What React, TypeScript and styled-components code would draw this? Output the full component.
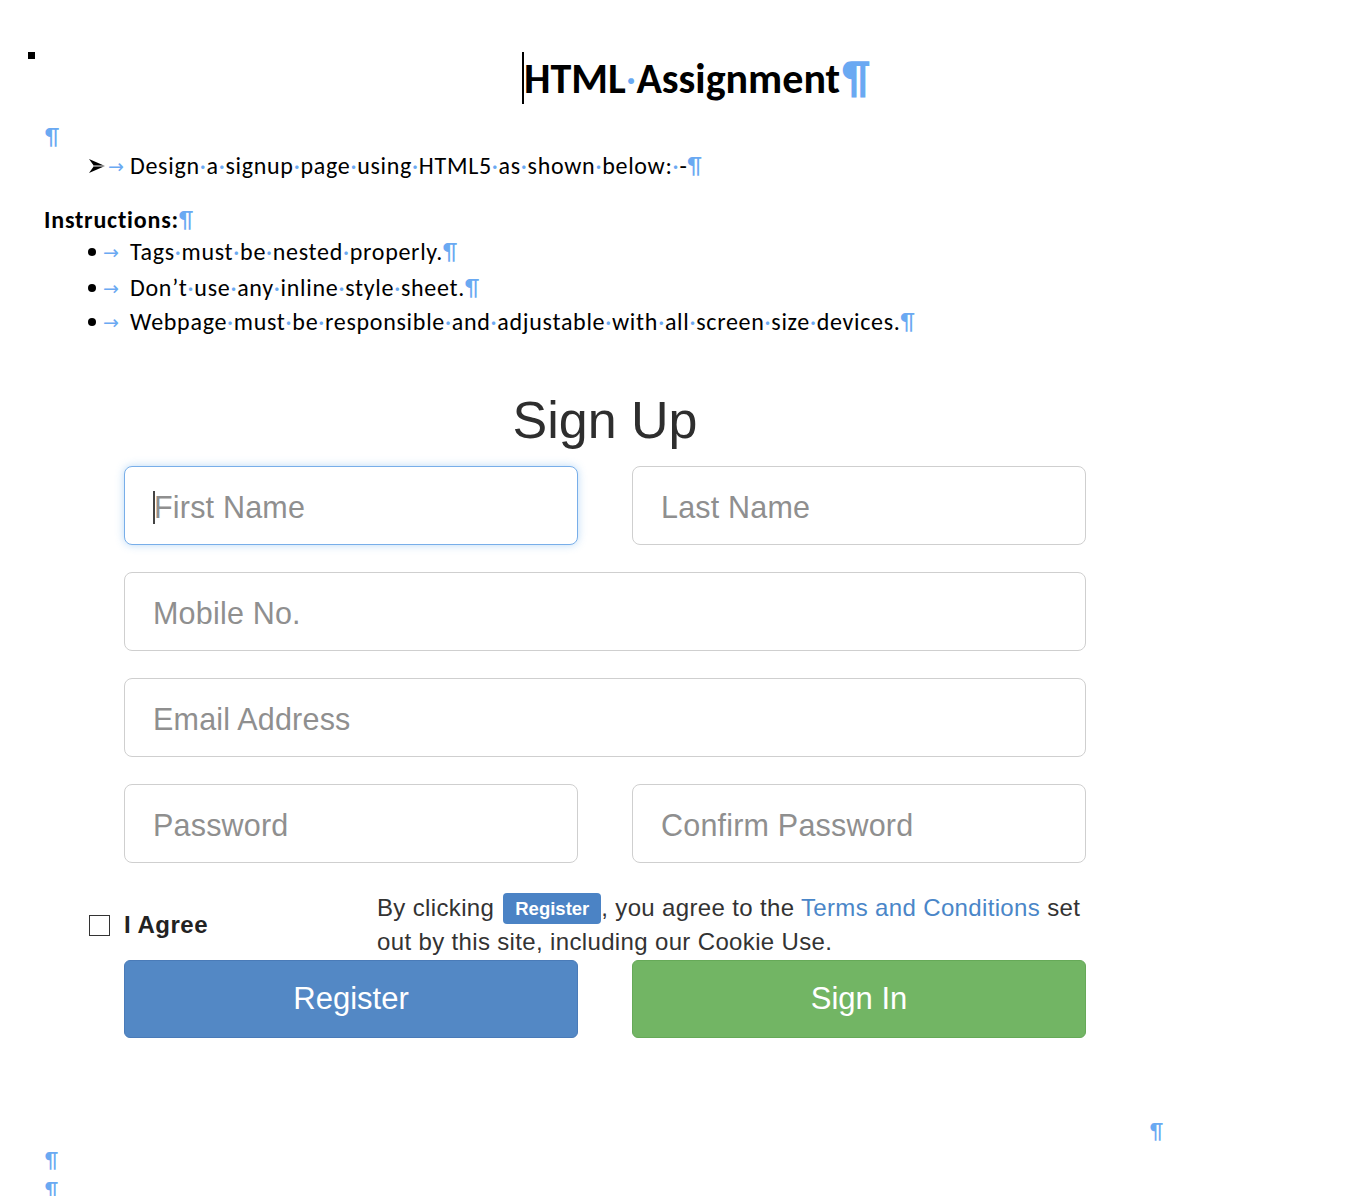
import React from "react";
import styled, { createGlobalStyle } from "styled-components";

const GlobalStyle = createGlobalStyle`
  html, body { margin: 0; padding: 0; background: #ffffff; }
  body { font-family: Carlito, Lato, "Liberation Sans", sans-serif; color: #000; }
  * { box-sizing: border-box; }
`;

const Page = styled.div`
  width: 1348px;
  height: 1196px;
  overflow: hidden;
  display: flex;
  flex-direction: column;
`;

const TitleRow = styled.div`
  display: flex;
  align-items: center;
  height: 52px;
  margin-top: 52px;
  padding-left: 28px;
`;

const Anchor = styled.div`
  width: 7px;
  height: 7px;
  background: #000;
  align-self: flex-start;
`;

const Caret = styled.div`
  width: 2px;
  height: 52px;
  background: #000;
  margin-left: 487px;
`;

const Title = styled.h1`
  margin: 0;
  font-family: Carlito, Lato, sans-serif;
  font-weight: 700;
  font-size: 42px;
  line-height: 52px;
  color: #000;
  white-space: nowrap;
`;

const BigMark = styled.span`
  color: #6aa9f2;
  font-weight: 700;
  font-size: 46px;
  margin-left: 2px;
`;

const Mark = styled.span`
  color: #6aa9f2;
  font-weight: 400;
`;

const Dot = styled.span`
  color: #6aa9f2;
  font-weight: 400;
`;

const DocLine = styled.div<{ $top: number; $indent: number }>`
  display: flex;
  align-items: center;
  height: 24px;
  line-height: 24px;
  margin-top: ${(p) => p.$top}px;
  padding-left: ${(p) => p.$indent}px;
  font-size: 24px;
  letter-spacing: 0.7px;
  white-space: nowrap;
`;

const Strong = styled.span`
  font-weight: 700;
  letter-spacing: 0.8px;
`;

const Marker = styled.span<{ $w: number }>`
  display: inline-flex;
  align-items: center;
  width: ${(p) => p.$w}px;
  letter-spacing: 0;
`;

const ArrowHead = styled.svg`
  width: 18px;
  height: 16px;
  display: block;
`;

const BulletDot = styled.span`
  display: inline-block;
  width: 8px;
  height: 8px;
  border-radius: 50%;
  background: #000;
`;

const Tab = styled.span<{ $w: number }>`
  display: inline-block;
  width: ${(p) => p.$w}px;
  color: #6aa9f2;
  font-family: "DejaVu Sans", sans-serif;
  font-size: 19px;
  letter-spacing: 0;
`;

const FormArea = styled.div`
  width: 962px;
  margin-left: 124px;
  display: flex;
  flex-direction: column;
`;

const FormTitle = styled.h2`
  margin: 56px 0 0;
  height: 60px;
  line-height: 60px;
  text-align: center;
  font-family: "Liberation Sans", Arial, sans-serif;
  font-weight: 400;
  font-size: 52px;
  color: #2e2e2e;
`;

const FieldGrid = styled.div`
  margin-top: 16px;
  display: grid;
  grid-template-columns: 1fr 1fr;
  column-gap: 54px;
  row-gap: 27px;
`;

const Field = styled.div<{ $wide?: boolean; $focused?: boolean }>`
  grid-column: ${(p) => (p.$wide ? "1 / span 2" : "auto")};
  height: 79px;
  border: 1.5px solid ${(p) => (p.$focused ? "#78aee9" : "#cfcfcf")};
  border-radius: 8px;
  box-shadow: ${(p) =>
    p.$focused ? "0 0 9px rgba(102, 170, 235, 0.45)" : "none"};
  display: flex;
  align-items: center;
  padding-left: 28px;
  padding-top: 3px;
  font-family: "Liberation Sans", Arial, sans-serif;
  font-size: 30.5px;
  letter-spacing: 0.2px;
  color: #8f8f8f;
  background: #fff;
`;

const TextCaret = styled.span`
  display: inline-block;
  width: 2px;
  height: 33px;
  background: #444;
  margin-right: -1px;
`;

const AgreeRow = styled.div`
  margin-top: 28px;
  margin-left: -35px;
  height: 68px;
  display: flex;
  align-items: center;
`;

const CheckLabel = styled.label`
  display: flex;
  align-items: center;
  gap: 14px;
  width: 288px;
  font-family: "Liberation Sans", Arial, sans-serif;
  font-weight: 700;
  font-size: 24px;
  color: #222;
  letter-spacing: 0.5px;
`;

const CheckBox = styled.span`
  width: 21px;
  height: 21px;
  border: 1.6px solid #333;
  background: #fff;
`;

const Terms = styled.p`
  margin: 0;
  font-family: "Liberation Sans", Arial, sans-serif;
  font-size: 24px;
  line-height: 34px;
  letter-spacing: 0.35px;
  color: #333;
  white-space: nowrap;
`;

const Badge = styled.span`
  display: inline-block;
  background: #4b83c5;
  color: #fff;
  font-weight: 700;
  font-size: 18.5px;
  letter-spacing: 0;
  line-height: 31px;
  height: 31px;
  padding: 0 12px;
  margin-left: 2px;
  border-radius: 4px;
  vertical-align: 1px;
`;

const Link = styled.span`
  color: #4a86c8;
`;

const ButtonRow = styled.div`
  margin-top: 1px;
  display: grid;
  grid-template-columns: 1fr 1fr;
  column-gap: 54px;
`;

const Button = styled.button<{ $variant: "primary" | "success" }>`
  height: 78px;
  border-radius: 6px;
  border: 1.5px solid
    ${(p) => (p.$variant === "primary" ? "#4a7bb8" : "#66a958")};
  background: ${(p) => (p.$variant === "primary" ? "#5388c5" : "#72b564")};
  color: #fff;
  font-family: "Liberation Sans", Arial, sans-serif;
  font-size: 31px;
  cursor: pointer;
`;

const PilcrowLine = styled.div<{ $top: number; $indent: number }>`
  margin-top: ${(p) => p.$top}px;
  padding-left: ${(p) => p.$indent}px;
  height: 22px;
  line-height: 22px;
  font-size: 22px;
  color: #6aa9f2;
`;

const Words: React.FC<{ text: string }> = ({ text }) => {
  const parts = text.split(" ");
  return (
    <>
      {parts.map((w, i) => (
        <React.Fragment key={i}>
          {w}
          {i < parts.length - 1 && <Dot>·</Dot>}
        </React.Fragment>
      ))}
    </>
  );
};

const bullets = [
  "Tags must be nested properly.",
  "Don’t use any inline style sheet.",
  "Webpage must be responsible and adjustable with all screen size devices.",
];

const bulletTops = [8, 12, 10];

export default function App() {
  return (
    <>
      <GlobalStyle />
      <Page>
        <TitleRow>
          <Anchor />
          <Caret />
          <Title>
            HTML<Dot>·</Dot>Assignment<BigMark>¶</BigMark>
          </Title>
        </TitleRow>

        <DocLine $top={21} $indent={45}>
          <Mark>¶</Mark>
        </DocLine>

        <DocLine $top={5} $indent={88}>
          <Marker $w={20}>
            <ArrowHead viewBox="0 0 18 16">
              <path d="M1 1 L17 8 L1 15 L6 8 Z" fill="#000" />
              <path d="M6 8 L17 8" stroke="#fff" strokeWidth="1" />
            </ArrowHead>
          </Marker>
          <Tab $w={22}>→</Tab>
          <span>
            <Words text="Design a signup page using HTML5 as shown below: -" />
            <Mark>¶</Mark>
          </span>
        </DocLine>

        <DocLine $top={30} $indent={44}>
          <Strong>Instructions:</Strong>
          <Mark>¶</Mark>
        </DocLine>

        {bullets.map((b, i) => (
          <DocLine key={b} $top={bulletTops[i]} $indent={88}>
            <Marker $w={15}>
              <BulletDot />
            </Marker>
            <Tab $w={27}>→</Tab>
            <span>
              <Words text={b} />
              <Mark>¶</Mark>
            </span>
          </DocLine>
        ))}

        <FormArea>
          <FormTitle>Sign Up</FormTitle>
          <FieldGrid>
            <Field $focused>
              <TextCaret />
              First Name
            </Field>
            <Field>Last Name</Field>
            <Field $wide>Mobile No.</Field>
            <Field $wide>Email Address</Field>
            <Field>Password</Field>
            <Field>Confirm Password</Field>
          </FieldGrid>

          <AgreeRow>
            <CheckLabel>
              <CheckBox />I Agree
            </CheckLabel>
            <Terms>
              By clicking <Badge>Register</Badge>, you agree to the{" "}
              <Link>Terms and Conditions</Link> set
              <br />
              out by this site, including our Cookie Use.
            </Terms>
          </AgreeRow>

          <ButtonRow>
            <Button $variant="primary">Register</Button>
            <Button $variant="success">Sign In</Button>
          </ButtonRow>
        </FormArea>

        <PilcrowLine $top={83} $indent={1150}>
          ¶
        </PilcrowLine>
        <PilcrowLine $top={7} $indent={45}>
          ¶
        </PilcrowLine>
        <PilcrowLine $top={8} $indent={45}>
          ¶
        </PilcrowLine>
      </Page>
    </>
  );
}
